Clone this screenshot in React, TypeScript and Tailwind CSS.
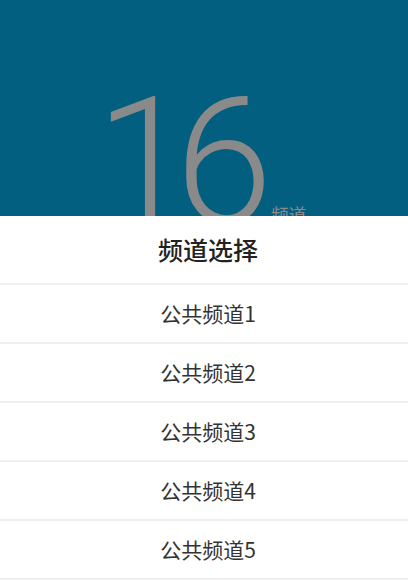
const channels = ["公共频道1", "公共频道2", "公共频道3", "公共频道4", "公共频道5"];

export default function App() {
  return (
    <div className="flex h-[581px] w-[408px] flex-col overflow-hidden bg-[#035f7f] font-['Noto_Sans_CJK_SC',sans-serif]">
      {/* current channel display behind the sheet */}
      <div className="h-[216px] shrink-0 overflow-hidden">
        <div className="flex items-baseline justify-center pt-[74px] pr-[6px]">
          <span className="font-['Roboto',sans-serif] text-[176px] leading-none font-light tracking-[-18px] text-[#8a8a8a]">
            16
          </span>
          <span className="ml-[16px] text-[18px] text-[#8a8a8a]">频道</span>
        </div>
      </div>

      {/* channel picker sheet */}
      <div className="flex-1 bg-white">
        <div className="flex h-[69px] items-center justify-center border-b-2 border-[#efefef] pl-2 text-[25px] font-medium text-[#222]">
          频道选择
        </div>
        {channels.map((name) => (
          <div
            key={name}
            className="flex h-[59px] items-center justify-center border-b-2 border-[#efefef] pl-2 text-[21px] text-[#333]"
          >
            {name}
          </div>
        ))}
      </div>
    </div>
  );
}
